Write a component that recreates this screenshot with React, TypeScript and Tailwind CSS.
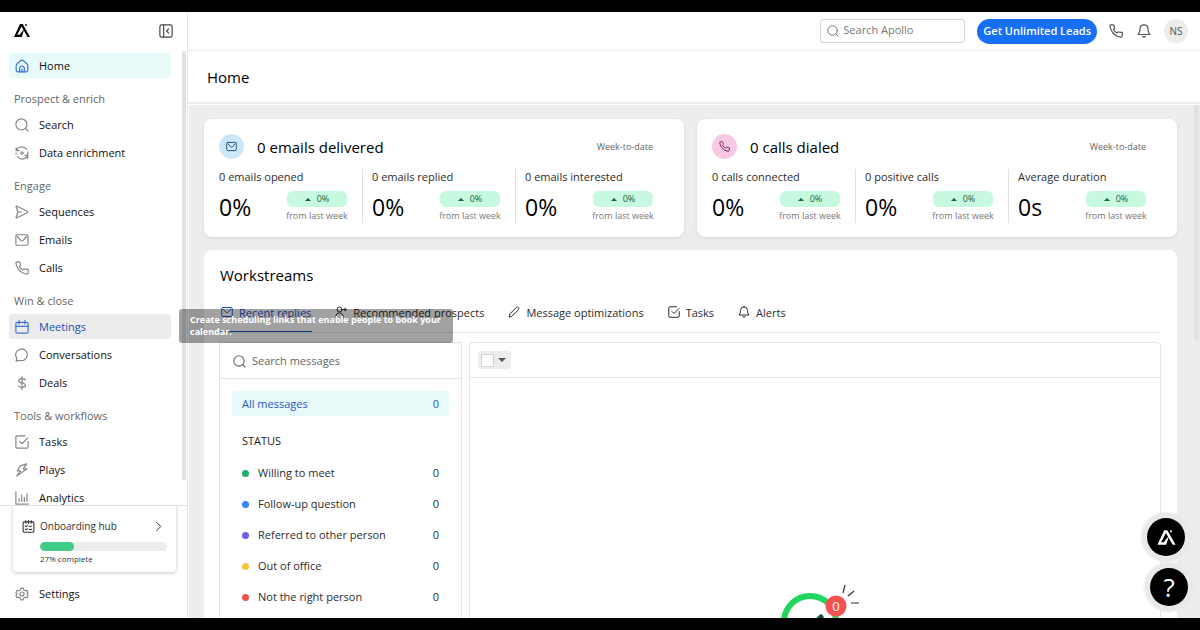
import React from 'react'

type IconProps = { children: React.ReactNode; className?: string }

function Icon({ children, className = 'size-[14px]' }: IconProps) {
  return (
    <svg viewBox="0 0 24 24" fill="none" stroke="currentColor" strokeWidth="2" strokeLinecap="round" strokeLinejoin="round" className={`shrink-0 ${className}`} aria-hidden="true">
      {children}
    </svg>
  )
}

const shapes = {
  home: <><path d="M2 11.5 C2 9.5 2.8 8.6 4 7.6 L10 2.6 Q12 1 14 2.6 L20 7.6 C21.2 8.6 22 9.5 22 11.5 V19 Q22 22 19 22 H5 Q2 22 2 19 Z" /><path d="M8 22 V16 Q8 12 12 12 Q16 12 16 16 V22 M12 17 V22" /></>,
  search: <><circle cx="11" cy="11" r="9.5" /><path d="M18 18 L22.5 22.5" /></>,
  enrich: <><path d="M2 8 H7 M2 3 V8 C5 1 15 -1 20 6 M22 10 Q22.5 13 21 16 M22 16 H17 M22 21 V16 C19 23 9 25 4 18 M2 14 Q1.5 13 2 12" /><circle cx="12" cy="12" r="2" /></>,
  send: <path d="M2 3.5 Q1.5 1.5 3.5 2 L21 10.6 Q23 12 21 13.4 L3.5 22 Q1.5 22.5 2 20.5 L5 12 Z M5 12 H12" />,
  mail: <><rect x="1.5" y="3" width="21" height="18" rx="2.5" /><path d="M4 6 L10 12.5 Q12 14.5 14 12.5 L20 6" /></>,
  phone: <path d="M22.5 17.5 v3 a2 2 0 0 1-2.2 2 A20 20 0 0 1 11.5 19.4 a19.6 19.6 0 0 1-6-6 A20 20 0 0 1 1.6 3.7 a2 2 0 0 1 2-2.2 h3 a2 2 0 0 1 2 1.7 c.13 1 .36 1.9 .7 2.8 a2 2 0 0 1-.45 2.1 L7.6 9.4 a16 16 0 0 0 6 6 l1.27-1.27 a2 2 0 0 1 2.1-.45 c.9.34 1.85.57 2.8.7 A2 2 0 0 1 22.5 17.5z" />,
  calendar: <><rect x="1.5" y="4" width="21" height="18.5" rx="2.5" /><path d="M1.5 11 H22.5 M7 1 V7 M17 1 V7" /></>,
  chat: <path d="M3 17.5 A10 10 0 1 1 7.5 21 L2 22.5 Z" />,
  dollar: <path d="M12 1 V23 M18 6.5 Q16.5 4.5 12 4.5 Q6.5 4.5 6.5 8 Q6.5 11 12 12 Q18 13 18 16 Q18 19.5 12 19.5 Q7.5 19.5 6 17.5" />,
  check: <><path d="M22.5 11 V20 Q22.5 22.5 20 22.5 H4 Q1.5 22.5 1.5 20 V4 Q1.5 1.5 4 1.5 H17" /><path d="M8 11 L12 15 L22 5" /></>,
  bolt: <path d="M20 1.5 L9 5 L4 13.5 H9.5 L3 22.5 L20.5 10 H14 Z" />,
  chart: <path d="M1.5 1.5 V22.5 H22.5 M7 18 V13 M11.5 18 V7 M16 18 V11 M20.5 18 V5" />,
  gear: <><path d="M10 2 h4 l1 3 2.5 1.4 3-.6 2 3.5-2 2.7 2 2.7-2 3.5-3-.6-2.5 1.4-1 3h-4l-1-3-2.5-1.4-3 .6-2-3.5 2-2.7-2-2.7 2-3.5 3 .6 2.5-1.4z" /><circle cx="12" cy="12" r="3.5" /></>,
  person: <><circle cx="9" cy="7" r="5" /><path d="M1.5 22 Q1.5 14 9 14 Q16.5 14 16.5 22 M20 4 V10 M17 7 H23" /></>,
  pencil: <path d="M2.5 21.5 L4 15.5 L17 2.8 Q19 1.3 21 3 Q22.8 5 21.2 7 L8.5 20 Z" />,
  bell: <><path d="M12 1.5 Q5 1.5 5 9 Q5 14.5 2 18 H22 Q19 14.5 19 9 Q19 1.5 12 1.5 Z" /><path d="M9.5 21.5 Q12 23.5 14.5 21.5" /></>,
  panel: <><rect x="1.5" y="1.5" width="21" height="21" rx="3" /><path d="M8 1.5 V22.5 M16.5 8.5 L13 12 L16.5 15.5" /></>,
  list: <><rect x="2" y="3.5" width="20" height="19" rx="2.5" /><path d="M7 1 V6 M12 1 V6 M17 1 V6 M6 11 L7.5 12.3 L10 10 M13 11.5 H18 M6 17 L7.5 18.3 L10 16 M13 17.5 H18" /></>,
  chevron: <path d="M8 3 L17 12 L8 21" />,
}

type Shape = keyof typeof shapes

function Logo({ className = '' }: { className?: string }) {
  return (
    <svg viewBox="0 0 32 30" className={className} fill="currentColor" aria-hidden="true">
      <path d="M12 2 H17.5 L32 28 H27 L15 7 L6.5 23.5 H11 L20.5 12 L15.5 28 H0 Z" />
      <circle cx="24" cy="4" r="1.8" />
    </svg>
  )
}

const groups: { title?: string; items: { label: string; icon: Shape }[] }[] = [
  { items: [{ label: 'Home', icon: 'home' }] },
  { title: 'Prospect & enrich', items: [{ label: 'Search', icon: 'search' }, { label: 'Data enrichment', icon: 'enrich' }] },
  { title: 'Engage', items: [{ label: 'Sequences', icon: 'send' }, { label: 'Emails', icon: 'mail' }, { label: 'Calls', icon: 'phone' }] },
  { title: 'Win & close', items: [{ label: 'Meetings', icon: 'calendar' }, { label: 'Conversations', icon: 'chat' }, { label: 'Deals', icon: 'dollar' }] },
  { title: 'Tools & workflows', items: [{ label: 'Tasks', icon: 'check' }, { label: 'Plays', icon: 'bolt' }, { label: 'Analytics', icon: 'chart' }] },
]

function NavItem({ label, icon }: { label: string; icon: Shape }) {
  const home = label === 'Home'
  const hovered = label === 'Meetings'
  const tone = home ? 'bg-[#e8f9fa] text-[#111]' : hovered ? 'bg-[#ececec] text-[#1d50b0]' : 'text-[#111]'
  return (
    <a href="#" className={`flex h-[25px] items-center gap-[10px] rounded px-[6px] font-medium ${tone}`}>
      <Icon className={`size-[14px] ${home || hovered ? 'text-[#3b74d8]' : 'text-[#858585]'}`}>{shapes[icon]}</Icon>
      <span className="pt-px">{label}</span>
    </a>
  )
}

function Sidebar() {
  return (
    <aside className="flex w-[188px] shrink-0 flex-col border-r border-[#e6e6e6]">
      <div className="flex h-[39px] shrink-0 items-center justify-between px-[14px] pb-[2px]">
        <Logo className="h-[15px] w-4 text-black" />
        <button aria-label="Collapse sidebar" className="text-[#444]"><Icon>{shapes.panel}</Icon></button>
      </div>
      <div className="flex min-h-0 flex-1 justify-between overflow-hidden">
        <nav className="flex-1 pl-[9px] pr-[11px] pt-[2px]">
          {groups.map((g, i) => (
            <div key={i}>
              {g.title && <h2 className="mb-[3px] mt-[11px] h-5 pl-[5px] leading-5 text-[#666]">{g.title}</h2>}
              <div className="grid gap-[3px]">{g.items.map(it => <NavItem key={it.label} {...it} />)}</div>
            </div>
          ))}
        </nav>
        <div className="mr-px h-[429px] w-1 rounded bg-[#dfe1e3]" />
      </div>
      <div className="shrink-0 border-t border-[#e2e2e2] pl-[9px] pr-[11px] pb-[12px]">
        <div className="ml-[4px] rounded-b bg-white px-[9px] pb-[7px] pt-[12px] shadow-[0_1px_3px_1px_#dcdcdc]">
          <a href="#" className="flex h-[16px] items-center gap-[5px] text-[10px] text-[#333]">
            <Icon className="size-[13px] text-[#333]">{shapes.list}</Icon>
            <span className="flex-1">Onboarding hub</span>
            <Icon className="mr-[3px] size-[11px] text-[#222]">{shapes.chevron}</Icon>
          </a>
          <div className="ml-[18px] mt-[8px] h-[9px] overflow-hidden rounded-full bg-[#ececeb]" role="progressbar" aria-valuenow={27} aria-label="Onboarding progress">
            <div className="h-full w-[27%] rounded-full bg-[#40cc86]" />
          </div>
          <div className="ml-[18px] mt-px text-[8px] leading-[13px] text-[#333]">27% complete</div>
        </div>
        <div className="mt-[9px]"><NavItem label="Settings" icon="gear" /></div>
      </div>
    </aside>
  )
}

function TopBar() {
  return (
    <header className="flex h-[39px] shrink-0 items-center justify-end border-b border-[#ebebeb] pr-[12px]">
      <label className="mb-px flex h-6 w-[145px] items-center gap-[4px] rounded-[3px] border border-[#d4d4d4] px-[6px] text-[#777]">
        <Icon className="size-[12px]">{shapes.search}</Icon>
        <input aria-label="Search Apollo" placeholder="Search Apollo" className="w-full min-w-0 outline-none placeholder:text-[#777]" />
      </label>
      <button className="ml-[12px] h-[25px] rounded-full bg-[#166ff6] px-[6px] font-semibold text-white">Get Unlimited Leads</button>
      <button aria-label="Calls" className="ml-[12px] text-[#555]"><Icon>{shapes.phone}</Icon></button>
      <button aria-label="Notifications" className="ml-[14px] text-[#555]"><Icon>{shapes.bell}</Icon></button>
      <button className="ml-[13px] size-6 rounded-full bg-[#ececea] text-[10px] text-[#555]">NS</button>
    </header>
  )
}

type StatProps = { title: string; icon: Shape; tone: string; stats: [string, string][] }

function StatCard({ title, icon, tone, stats }: StatProps) {
  return (
    <section className="flex-1 rounded-lg bg-white pb-[14px] pl-[15px] pr-4 pt-[15px] shadow-[0_1px_3px_#d4d4d4]">
      <div className="flex items-center pr-[15px]">
        <span className={`grid size-[25px] place-items-center rounded-full ${tone}`}><Icon className="size-[11px]">{shapes[icon]}</Icon></span>
        <h2 className="ml-[13px] flex-1 text-[15px] leading-5 text-black">{title}</h2>
        <span className="text-[9px] text-[#666]">Week-to-date</span>
      </div>
      <div className="mt-[10px] flex">
        {stats.map(([label, value], i) => (
          <div key={label} className={`h-[54px] flex-1 pr-[15px] ${i ? 'border-l border-[#e0e0e0] pl-[9px]' : ''}`}>
            <div className="whitespace-nowrap leading-4 text-[#2c2c2c]">{label}</div>
            <div className="mt-[6px] flex justify-between">
              <span className="text-[23px] leading-8 text-black">{value}</span>
              <div className="flex w-[60px] flex-col items-center whitespace-nowrap">
                <div className="flex h-4 w-full items-center justify-center gap-[6px] rounded-[6px] bg-[#c6f9df] text-[9px] text-[#17643d]">
                  <span className="size-0 border-x-[3px] border-b-[3px] border-x-transparent border-b-[#17643d]" />0%
                </div>
                <div className="text-[9px] leading-[17px] text-[#777]">from last week</div>
              </div>
            </div>
          </div>
        ))}
      </div>
    </section>
  )
}

const tabs: { label: string; icon: Shape }[] = [
  { label: 'Recent replies', icon: 'mail' },
  { label: 'Recommended prospects', icon: 'person' },
  { label: 'Message optimizations', icon: 'pencil' },
  { label: 'Tasks', icon: 'check' },
  { label: 'Alerts', icon: 'bell' },
]

const statuses = [
  { label: 'Willing to meet', dot: 'bg-[#1fae68]' },
  { label: 'Follow-up question', dot: 'bg-[#3b86f0]' },
  { label: 'Referred to other person', dot: 'bg-[#7a5ce0]' },
  { label: 'Out of office', dot: 'bg-[#f2c63c]' },
  { label: 'Not the right person', dot: 'bg-[#ee5150]' },
]

function Messages() {
  return (
    <div className="w-[243px] shrink-0 border border-[#e4e4e4]">
      <label className="flex h-[36px] items-center gap-[6px] border-b border-[#e4e4e4] pl-[13px] pr-[12px] pt-px text-[#666]">
        <Icon className="size-[13px]">{shapes.search}</Icon>
        <input aria-label="Search messages" placeholder="Search messages" className="w-full min-w-0 outline-none placeholder:text-[#666]" />
      </label>
      <div className="px-[12px] pt-[12px]">
        <button className="flex h-[25px] w-full items-center justify-between rounded-[3px] bg-[#e8f9fa] px-[10px] pt-px font-medium text-[#1f58d0]">
          <span>All messages</span><span>0</span>
        </button>
        <h3 className="mt-[17px] pl-[10px] font-medium leading-4">STATUS</h3>
        <div className="mt-[9px]">
          {statuses.map(s => (
            <button key={s.label} className="flex h-[31px] w-full items-center px-[10px] text-[#2c2c2c]">
              <span className={`mr-[9px] size-[7px] rounded-full ${s.dot}`} />
              <span className="flex-1 text-left">{s.label}</span>
              <span>0</span>
            </button>
          ))}
        </div>
      </div>
    </div>
  )
}

function Preview() {
  return (
    <div className="flex-1 rounded-t border border-[#e4e4e4]">
      <div className="flex h-[35px] items-center border-b border-[#e8e8e8] pl-2">
        <div className="flex h-[18px] w-[33px] items-center justify-between rounded-[2px] bg-[#ececec] pl-[3px] pr-[5px]">
          <input type="checkbox" aria-label="Select all" className="size-[13px] appearance-none border border-[#d4d4d4] bg-white" />
          <button aria-label="Selection options" className="size-0 border-x-4 border-t-4 border-x-transparent border-t-[#555]" />
        </div>
      </div>
      <svg viewBox="0 0 90 90" className="mx-auto mt-[205px] size-[90px]" fill="none" aria-hidden="true">
        <circle cx="40" cy="39" r="26" stroke="#21d65c" strokeWidth="6" />
        <path d="M30 42 L37 49 L51 34" stroke="#0d5132" strokeWidth="5" strokeLinecap="round" />
        <circle cx="66" cy="23" r="10.5" fill="#f4524f" />
        <path d="M73 10 L75 2 M78 13 L84 8 M81 20 H89" stroke="#333" strokeWidth="1.2" />
        <text x="66" y="28" textAnchor="middle" fontSize="13" fill="white">0</text>
      </svg>
    </div>
  )
}

function Workstreams() {
  return (
    <section className="min-h-0 flex-1 overflow-hidden rounded-t-lg bg-white pl-[15px] pr-4 pt-[15px]">
      <h2 className="pl-px text-[15px] leading-5 text-black">Workstreams</h2>
      <div className="mt-[17px] flex gap-[22px] border-b border-[#e8e8e8] pl-px">
        {tabs.map((t, i) => (
          <button key={t.label} className={`flex h-[30px] items-start gap-[6px] whitespace-nowrap border-b px-px pt-[2px] font-medium leading-[18px] ${i === 0 ? 'border-[#1f58d0] text-[#1f58d0]' : 'border-transparent text-[#2c2c2c]'}`}>
            <Icon className="mt-[2px] size-[12px]">{shapes[t.icon]}</Icon>{t.label}
          </button>
        ))}
      </div>
      <div className="mt-[9px] flex h-full gap-[7px]">
        <Messages />
        <Preview />
      </div>
    </section>
  )
}

export default function App() {
  return (
    <div className="relative flex h-screen overflow-hidden border-y-12 border-black bg-white font-['Open_Sans',sans-serif] text-[11px] text-[#222]">
      <Sidebar />
      <div className="flex min-w-0 flex-1 flex-col">
        <TopBar />
        <h1 className="h-[53px] shrink-0 border-b-2 border-[#ececec] pl-[19px] text-[15px] leading-[52px] text-black">Home</h1>
        <div className="mt-px ml-px flex min-h-0 flex-1">
          <main className="flex min-w-0 flex-1 flex-col gap-[13px] bg-[#ededec] pl-[15px] pr-4 pt-[14px]">
            <div className="flex gap-[13px]">
              <StatCard title="0 emails delivered" icon="mail" tone="bg-[#cbe7f8] text-[#1b4b80]" stats={[['0 emails opened', '0%'], ['0 emails replied', '0%'], ['0 emails interested', '0%']]} />
              <StatCard title="0 calls dialed" icon="phone" tone="bg-[#f9c8e2] text-[#7c2458]" stats={[['0 calls connected', '0%'], ['0 positive calls', '0%'], ['Average duration', '0s']]} />
            </div>
            <Workstreams />
          </main>
          <div className="w-[7px] bg-[#ededec] pl-px"><div className="h-[235px] w-[5px] rounded bg-[#dfe1e3]" /></div>
        </div>
      </div>
      <div role="tooltip" className="absolute left-[179px] top-[297px] w-[274px] rounded-[3px] bg-black/37 px-[11px] py-[5px] text-[9px] font-bold leading-[12px] text-white">
        Create scheduling links that enable people to book your calendar.
      </div>
      <button aria-label="Open assistant" className="absolute bottom-[62px] right-[15px] grid size-[38px] place-items-center rounded-full bg-black text-white shadow-[0_0_2px_6px_#e8e9e9]">
        <Logo className="h-[17px] w-[19px]" />
      </button>
      <button aria-label="Help" className="absolute bottom-[12px] right-[12px] size-[38px] rounded-full bg-black text-[26px] leading-[38px] text-white shadow-[0_0_2px_6px_#e8e9e9]">?</button>
    </div>
  )
}
